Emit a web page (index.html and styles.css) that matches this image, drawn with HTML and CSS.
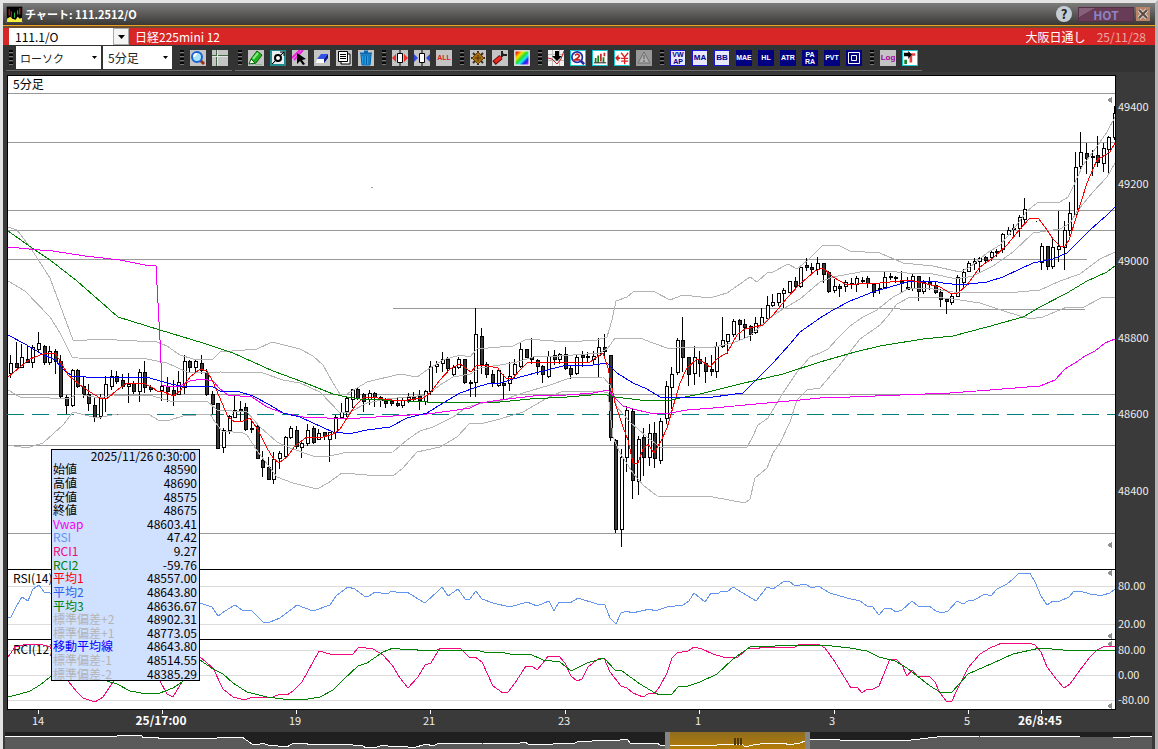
FILE: index.html
```html
<!DOCTYPE html>
<html lang="ja">
<head>
  <meta charset="UTF-8">
  <meta name="viewport" content="width=device-width, initial-scale=1.0">
  <title>チャート: 111.2512/O</title>
  <link rel="stylesheet" href="styles.css">
</head>
<body>
  <div class="window">
    <header class="titlebar">
      <svg class="app-icon" viewBox="0 0 16 16">
        <rect width="16" height="16" fill="#000" stroke="#888"/>
        <path d="M3 3v6M5 5v6" stroke="#d02020"/><path d="M8 6v5M11 4v4" stroke="#20c040"/><path d="M13 2v6" stroke="#e03030"/>
        <path d="M1 15v-3l3-2 2 2 3 1 2-3 2 2 2-1v4z" fill="#f8f040"/>
      </svg>
      <h1>チャート: 111.2512/O</h1>
      <button class="help" aria-label="ヘルプ">?</button>
      <button class="hot">HOT</button>
      <button class="close" aria-label="閉じる">
        <svg viewBox="0 0 14 14"><path d="M3 3l8 8M11 3l-8 8" stroke="#d8d0c0" stroke-width="4"/><path d="M3 3l8 8M11 3l-8 8" stroke="#5a4a48" stroke-width="2"/></svg>
      </button>
    </header>

    <div class="symbolbar">
      <input class="code" type="text" value="111.1/O" aria-label="銘柄コード">
      <button class="drop" aria-label="銘柄一覧"><svg viewBox="0 0 7 4"><path d="M0 0h7L3.500 4z"/></svg></button>
      <span class="name">日経225mini 12</span>
      <span class="market">大阪日通し</span>
      <span class="date">25/11/28</span>
    </div>

    <nav class="toolbars">
      <div class="toolbar">
        <span class="sep"></span>
        <select class="type" aria-label="チャート種類"><option>ローソク</option></select>
        <select class="span" aria-label="足種"><option>5分足</option></select>
        <span class="sep"></span>
        <button class="tool" aria-label="拡大"><svg viewBox="0 0 16 16"><path d="M10 10l4 4" stroke="#a03010" stroke-width="3"/><circle cx="7" cy="7" r="5" fill="#a8e4fa" stroke="#1860d8" stroke-width="2"/><path d="M4 7q0-3 3-3" stroke="#fff" fill="none" stroke-width="2"/></svg></button>
        <button class="tool" aria-label="十字線"><svg viewBox="0 0 16 16"><path d="M0 5.500h16M4.500 0v16" stroke="#456845"/><path d="M0 6.500h16M5.500 0v16" stroke="#e0e8e0"/></svg></button>
      </div>
      <div class="toolbar">
        <span class="sep"></span>
        <button class="tool" aria-label="ペン"><svg viewBox="0 0 16 16"><path d="M3 9L9 1l5 4-6 8-4 1z" fill="#20b020" stroke="#086808"/><path d="M5 9l5-6" stroke="#80f080" stroke-width="2"/><path d="M1 14l2-5 4 4z" fill="#fff" stroke="#086808"/><path d="M7 14.500h7" stroke="#88b888"/></svg></button>
        <button class="tool" aria-label="編集"><svg viewBox="0 0 16 16"><rect width="16" height="16" fill="#208c90"/><path d="M2 1h12L2 14zM14 2v12H3z" fill="#e8eef0"/><path d="M2 14L14 2M10 2h4v4" stroke="#000" fill="none"/><circle cx="8" cy="8" r="3" fill="#fff" stroke="#000" stroke-width="2"/></svg></button>
        <button class="tool" aria-label="選択"><svg viewBox="0 0 16 16"><path d="M0 8L8 0M2 10L11 0" stroke="#f020e0" stroke-width="2"/><path d="M5 3v11l3-3 3 4 2-1-3-4 4-1z" fill="#000"/></svg></button>
        <button class="tool" aria-label="消しゴム"><svg viewBox="0 0 16 16"><path d="M7 4h7l-4 5H3z" fill="#3050e8"/><path d="M14 4v4l-4 5V9z" fill="#001880"/><path d="M3 9h7v4H2z" fill="#fff"/></svg></button>
        <button class="tool" aria-label="一覧"><svg viewBox="0 0 16 16"><path d="M5 4h9v10H5z" fill="#fff" stroke="#000"/><path d="M2.500 1.500h9v10h-9z" fill="#fff" stroke="#000"/><path d="M4 4.500h6M4 6.500h6M4 8.500h6" stroke="#000"/></svg></button>
        <button class="tool" aria-label="削除"><svg viewBox="0 0 16 16"><path d="M2 3.500h12M6 1.500h4" stroke="#0868b8" stroke-width="2"/><path d="M3 5h10l-1 10H4z" fill="#20a0e8" stroke="#0060a8"/><path d="M6 6v8M8.500 6v8M11 6v8" stroke="#0060a8"/></svg></button>
        <span class="sep"></span>
        <button class="tool" aria-label="足幅拡大"><svg viewBox="0 0 16 16"><path d="M8 0v16" stroke="#000"/><path d="M5.500 3.500h5v9h-5z" fill="#fff" stroke="#000"/><path d="M0 8l4-4v8zM16 8l-4-4v8z" fill="#e83028"/></svg></button>
        <button class="tool" aria-label="足幅縮小"><svg viewBox="0 0 16 16"><path d="M8 0v16" stroke="#000"/><path d="M5.500 3.500h5v9h-5z" fill="#fff" stroke="#000"/><path d="M4 8L0 4v8zM12 8l4-4v8z" fill="#3048e0"/></svg></button>
        <button class="tool all">ALL</button>
        <span class="sep"></span>
        <button class="tool" aria-label="設定"><svg viewBox="0 0 16 16"><path d="M8 1v14M1 8h14M3 3l10 10M13 3L3 13" stroke="#3a3020" stroke-width="2"/><path d="M8 2l6 6-6 6-6-6z" fill="#a86c10" stroke="#60400c"/><path d="M5 8h6M8 5v6" stroke="#503408"/></svg></button>
        <button class="tool" aria-label="ツール"><svg viewBox="0 0 16 16"><path d="M8 8l4-4M10 1v4h5" stroke="#202020" stroke-width="2" fill="none"/><path d="M2 13l7-6" stroke="#700808" stroke-width="5"/><path d="M3 12l6-5" stroke="#f02820" stroke-width="3"/></svg></button>
        <button class="tool" aria-label="配色"><svg viewBox="0 0 16 16"><defs><linearGradient id="rainbow" x2="1" y2="1"><stop offset=".1" stop-color="#f01010"/><stop offset=".3" stop-color="#ffe000"/><stop offset=".48" stop-color="#20e030"/><stop offset=".62" stop-color="#20e8f8"/><stop offset=".76" stop-color="#1028f0"/><stop offset="1" stop-color="#f020e8"/></linearGradient></defs><path d="M1 1h14v14H1z" fill="url(#rainbow)" stroke="#eee"/></svg></button>
        <span class="sep"></span>
        <button class="tool" aria-label="売買"><svg viewBox="0 0 16 16"><path d="M0 0h16v16H0z" fill="#f0f0f0"/><path d="M0 4.500h16M0 10.500h16M4.500 0v16M11.500 0v16" stroke="#bbb"/><path d="M0 8l4 1 5 5 4-5 3-8" stroke="#c02020" fill="none"/><path d="M7 1h4v5h3l-5 5-5-5h3z"/></svg></button>
        <button class="tool cyan" aria-label="検索"><svg viewBox="0 0 16 16"><path d="M10 10l5 5" stroke="#2028a0" stroke-width="3"/><circle cx="7" cy="7" r="6" fill="#fff" stroke="#2030a8" stroke-width="2"/><path d="M4.500 5q3-3 5 0 0 2-5 5h6" stroke="#d02020" fill="none" stroke-width="2"/></svg></button>
        <button class="tool cyan" aria-label="比較"><svg viewBox="0 0 16 16"><path d="M3 8v5M6 5v8M12 7v6" stroke="#108020" stroke-width="2"/><path d="M9 3v9M13 2v4" stroke="#d02828" stroke-width="2"/><path d="M1 13.500h14" stroke="#000"/></svg></button>
        <button class="tool cyan" aria-label="円表示"><svg viewBox="0 0 16 16"><path d="M0 8l4-4v3h2v2H4v3z" fill="#d82020"/><path d="M7 2l4 5 4-5M11 7v8M7 8.500h8M7 11.500h8" stroke="#d82020" fill="none" stroke-width="1.500"/></svg></button>
        <button class="tool dim" aria-label="アラート"><svg viewBox="0 0 16 16"><path d="M8 2l6 11H2z" fill="#b0b0b0" stroke="#707070"/><path d="M8 5v4M8 10v2" stroke="#555"/></svg></button>
        <span class="sep"></span>
        <button class="tool vwap"><span>VW</span><span>AP</span></button>
        <button class="tool light">MA</button>
        <button class="tool light">BB</button>
        <button class="tool navy">MAE</button>
        <button class="tool navy">HL</button>
        <button class="tool navy">ATR</button>
        <button class="tool navy two"><span>PA</span><span>RA</span></button>
        <button class="tool navy">PVT</button>
        <button class="tool navy" aria-label="枠"><svg viewBox="0 0 16 16"><path d="M2.500 2.500h11v11h-11zM5.500 5.500h5v5h-5z" fill="none" stroke="#fff"/></svg></button>
        <span class="sep"></span>
        <button class="tool log">Log</button>
        <button class="tool cyan" aria-label="終了"><svg viewBox="0 0 16 16"><path d="M9 3v10M9 4h5" stroke="#e04040" stroke-width="3"/><path d="M1 2h5V0l4 4-4 5V6H1z"/><path d="M3 10v5" stroke="#108020" stroke-width="3"/></svg></button>
      </div>
    </nav>

    <main class="chart">
      <svg class="plot" viewBox="3 72 1152 677" role="img" aria-label="5分足チャート">
        <defs>
          <linearGradient id="gold" x2="0" y2="1"><stop offset="0" stop-color="#8f6d1e"/><stop offset="1" stop-color="#b47c08"/></linearGradient>
          <clipPath id="area"><rect x="8" y="76" width="1107" height="633"/></clipPath>
        </defs>
        <rect class="canvas" x="7.500" y="75.500" width="1108" height="634"/>
        <g class="sub-grid">
          <path d="M8 586.500h1107M8 624.500h1107M8 650.500h1107M8 675.500h1107M8 700.500h1107"/>
        </g>
        <g class="levels">
          <path d="M8 93.500h1107M8 142.500h1107M8 210.500h1107M8 230.500h1107M8 259.500h1079M393 308.500h507M900 309.500h185M8 394.500h1107M8 445.500h1107M8 533.500h1107"/>
          <path d="M371 187.500h2"/>
        </g>
        <path class="last" d="M7 414.500h1108"/>
        <path class="divider" d="M7 569.500h1109M7 639.500h1109"/>
        <g class="label">
          <text x="13" y="89">5分足</text>
          <text x="13" y="583">RSI(14)</text>
          <text x="13" y="654">RCI(12)</text>
        </g>
        <g id="series" clip-path="url(#area)"></g>
        <g class="marks">
          <path d="M1112 97v6l-5-3zM1112 542v6l-5-3zM1112 570v6l-5-3zM1112 633v6l-5-3zM1112 641v6l-5-3zM1112 703v6l-5-3z"/>
        </g>
        <g class="axis">
          <text x="1118" y="111">49400</text>
          <text x="1118" y="188">49200</text>
          <text x="1118" y="265">49000</text>
          <text x="1118" y="342">48800</text>
          <text x="1118" y="418">48600</text>
          <text x="1118" y="495">48400</text>
          <text x="1118" y="590">80.00</text>
          <text x="1118" y="628">20.00</text>
          <text x="1118" y="654">80.00</text>
          <text x="1118" y="679">0.00</text>
          <text x="1118" y="704">-80.00</text>
        </g>
        <g class="axis time">
          <path d="M38.500 710v4M162.500 710v4M296.500 710v4M430.500 710v4M565.500 710v4M699.500 710v4M834.500 710v4M968.500 710v4M1041.500 710v4"/>
          <text x="38" y="725">14</text>
          <text class="day" x="161" y="725">25/17:00</text>
          <text x="295" y="725">19</text>
          <text x="429" y="725">21</text>
          <text x="564" y="725">23</text>
          <text x="698" y="725">1</text>
          <text x="832" y="725">3</text>
          <text x="967" y="725">5</text>
          <text class="day" x="1040" y="725">26/8:45</text>
        </g>
        <rect class="nav-bg" x="5" y="732" width="1147" height="17"/>
        <polygon id="navArea" class="nav-area"/>
        <rect x="670" y="732" width="135" height="17" fill="url(#gold)"/>
        <polyline id="navLine" class="nav-line"/>
        <rect class="handle" x="665" y="732" width="5" height="17" rx="1"/>
        <rect class="handle" x="805" y="732" width="5" height="17" rx="1"/>
        <path class="grip" d="M735 738v7M738 738v7M741 738v7"/>
      </svg>

      <table class="tip">
        <caption>2025/11/26 0:30:00</caption>
        <tbody>
          <tr><th>始値</th><td>48590</td></tr>
          <tr><th>高値</th><td>48690</td></tr>
          <tr><th>安値</th><td>48575</td></tr>
          <tr><th>終値</th><td>48675</td></tr>
          <tr><th class="c-vwap">Vwap</th><td>48603.41</td></tr>
          <tr><th class="c-rsi">RSI</th><td>47.42</td></tr>
          <tr><th class="c-rci1">RCI1</th><td>9.27</td></tr>
          <tr><th class="c-green">RCI2</th><td>-59.76</td></tr>
          <tr><th class="c-red">平均1</th><td>48557.00</td></tr>
          <tr><th class="c-blue">平均2</th><td>48643.80</td></tr>
          <tr><th class="c-green">平均3</th><td>48636.67</td></tr>
          <tr><th class="c-band">標準偏差+2</th><td>48902.31</td></tr>
          <tr><th class="c-band">標準偏差+1</th><td>48773.05</td></tr>
          <tr><th class="c-mid">移動平均線</th><td>48643.80</td></tr>
          <tr><th class="c-band">標準偏差-1</th><td>48514.55</td></tr>
          <tr><th class="c-band">標準偏差-2</th><td>48385.29</td></tr>
        </tbody>
      </table>
    </main>
  </div>
  <script src="chart.js"></script>
</body>
</html>
```
FILE: styles.css
```css
* {
  box-sizing: border-box;
}

body {
  margin: 0;
  background-color: #3a3a3a;
  font-family: "Noto Sans CJK JP", sans-serif;
  font-size: 12px;
}

button, input, select {
  font-family: inherit;
  margin: 0;
  padding: 0;
  border: none;
}

.window {
  border: 3px solid #e4e4e4;
  border-right-color: #b4b4b4;
  border-bottom: none;
}

/* title bar */
.titlebar {
  display: flex;
  align-items: center;
  height: 23px;
  padding: 0 5px 0 3px;
  background: linear-gradient(#7c7c7c, #3a3834);
  border-bottom: 1px solid #f0a020;
}

.app-icon {
  width: 17px;
  height: 17px;
}

.titlebar h1 {
  flex: 1;
  margin: 0 2px;
  color: #fff;
  font-size: 11px;
  line-height: 20px;
}

.help {
  width: 16px;
  height: 16px;
  border-radius: 8px;
  background-color: #c4ccd4;
  color: #222;
  font-size: 13px;
  font-weight: bold;
  line-height: 16px;
}

.hot {
  width: 56px;
  height: 15px;
  margin: 0 2px 0 6px;
  border: 1px solid #56304a;
  background: linear-gradient(150deg, #86607a 20%, #683c56 21%);
  color: #8c84c4;
  font-size: 12px;
  font-weight: bold;
  line-height: 13px;
}

.close {
  width: 14px;
  height: 14px;
  background-color: #b88468;
}

.close svg {
  display: block;
}

/* symbol bar */
.symbolbar {
  display: flex;
  align-items: center;
  height: 19px;
  padding: 0 9px 0 6px;
  border-top: 2px solid #6a5030;
  background-color: #d82626;
  color: #fff;
  line-height: 17px;
}

.code {
  width: 104px;
  height: 17px;
  padding-left: 6px;
  background-color: #fff;
  font-size: 12px;
}

.drop {
  width: 16px;
  height: 17px;
  border: 1px solid #aaa;
  background-color: #f4f4f4;
}

.drop svg {
  display: block;
  width: 7px;
  margin: 0 auto;
}

.name {
  flex: 1;
  margin-left: 6px;
}

.date {
  margin-left: 11px;
  color: #e8a8a0;
}

/* toolbars */
.toolbars {
  display: flex;
  gap: 3px;
  height: 27px;
  padding: 0 3px;
  background-color: #333;
}

.toolbar {
  display: flex;
  align-items: center;
  gap: 6px;
  height: 26px;
  padding: 0 4px 0 3px;
  border-bottom: 1px solid #6c6c6c;
}

.sep {
  width: 4px;
  height: 16px;
  margin-left: 2px;
  background: repeating-linear-gradient(#080808 0 2px, #777 2px 3px, transparent 3px 4px);
}

.toolbar .sep:first-child {
  margin-left: 0;
}

.toolbar select {
  height: 23px;
  background: #fff url("data:image/svg+xml,%3Csvg xmlns='http://www.w3.org/2000/svg' width='5' height='3'%3E%3Cpath d='M0 0h5L2.500 3z'/%3E%3C/svg%3E") no-repeat right 4px center;
  appearance: none;
  color: #222;
}

.type {
  width: 85px;
  margin-left: -3px;
  padding-left: 4px;
  font-size: 11px;
}

.span {
  width: 69px;
  margin-left: -4px;
  padding-left: 5px;
  font-size: 12px;
}

.tool {
  width: 16px;
  height: 16px;
  background-color: #c4c4c4;
  overflow: hidden;
  font-family: "Liberation Sans", sans-serif;
  font-size: 8px;
  line-height: 16px;
  text-align: center;
}

.tool svg {
  display: block;
  width: 100%;
  height: 100%;
}

.all {
  color: #e01818;
  font-weight: bold;
  font-size: 7px;
}

.cyan {
  border: 1px solid #18c8d0;
  background-color: #fff;
}

.dim {
  background-color: #999;
}

.light, .vwap {
  border: 1px solid #1818d8;
  background-color: #e8e8f8;
  color: #000090;
  line-height: 14px;
  font-weight: bold;
}

.navy {
  background-color: #000080;
  color: #fff;
  font-size: 7px;
  font-weight: bold;
}

.vwap span, .two span {
  display: block;
  font-size: 7px;
  line-height: 7px;
}

.log {
  color: #a000a0;
  font-weight: bold;
}

/* chart */
.chart {
  position: relative;
}

.plot {
  display: block;
  width: 100%;
  background-color: #3a3a3a;
  shape-rendering: crispEdges;
  font-size: 12px;
}

.canvas {
  fill: #fff;
  stroke: #000;
}

.sub-grid {
  stroke: #dcdcdc;
}

.levels {
  stroke: #999;
}

.last {
  stroke: #008080;
  stroke-dasharray: 17 8;
}

.divider {
  stroke: #000;
}

.line {
  fill: none;
}

.band { stroke: #b4b4b4; }
.red { stroke: #f00; }
.blue { stroke: #00f; }
.green { stroke: #008000; }
.vwap-line { stroke: #f000f0; }
.rsi { stroke: #6495ed; }
.rci { stroke: #f0087c; }

.wick {
  stroke: #000;
}

.body {
  fill: #fff;
  stroke: #000;
}

.down {
  fill: #383838;
}

.marks {
  fill: #909090;
}

.axis {
  fill: #eee;
  font-size: 11px;
}

.time {
  text-anchor: middle;
}

.time path {
  stroke: #fff;
}

.day {
  font-weight: bold;
  fill: #fff;
  font-size: 12px;
}

.nav-bg {
  fill: #202020;
}

.nav-area {
  fill: #5a5a5a;
}

.nav-line {
  fill: none;
  stroke: #fff;
}

.handle {
  fill: #858585;
}

.grip {
  stroke: #4c3808;
  stroke-width: 2;
}

/* values under the cursor */
.tip {
  position: absolute;
  left: 48px;
  top: 377px;
  width: 149px;
  height: 219px;
  border: 1px solid #000;
  border-top: none;
  border-spacing: 0;
  background-color: #d0e0ff;
  line-height: 13px;
}

.tip caption {
  height: 13px;
  padding-right: 3px;
  border: 1px solid #000;
  border-bottom: none;
  background-color: #d0e0ff;
  line-height: 12px;
  text-align: right;
}

.tip th, .tip td {
  padding: 0 2px 0 1px;
  font-weight: normal;
  text-align: left;
}

.tip td {
  text-align: right;
}

.c-vwap { color: #f000f0; }
.c-rsi { color: #6495ed; }
.c-rci1 { color: #f0087c; }
.c-green { color: #008000; }
.c-red { color: #f00; }
.c-blue { color: #2860f0; }
.c-band { color: #b4b4b4; }
.c-mid { color: #00f; }
```
FILE: chart.js
```js
const NS = 'http://www.w3.org/2000/svg';
const STEP = 5.604;
const START = 10.5;

// index: high, low, body top, body bottom, 1 = falling
const candles = {
  0: [355,377,363,373,0], 1: [342,367,363,367,1], 2: [344,367,357,367,0], 3: [345,362,359,362,1],
  4: [345,367,347,362,0], 5: [332,352,343,349,0], 6: [345,364,346,362,1], 7: [346,364,351,362,0],
  8: [349,373,351,361,1], 9: [355,397,361,396,1], 10: [395,413,397,405,1], 11: [369,406,370,405,0],
  12: [369,387,370,386,1], 13: [377,397,386,394,1], 14: [384,410,394,403,1], 15: [397,421,405,417,1],
  16: [394,418,397,416,0], 17: [376,411,384,398,0], 18: [370,389,376,386,0], 19: [371,383,376,381,1],
  20: [374,388,380,386,1], 21: [373,402,384,386,0], 22: [381,393,383,391,1], 23: [369,401,372,391,0],
  24: [361,392,372,387,1], 25: [385,391,387,389,1], 27: [369,400,386,390,0], 28: [377,401,386,391,1],
  29: [380,405,390,395,1], 30: [371,394,382,394,0], 31: [355,393,361,387,0], 32: [360,372,361,367,1],
  33: [360,371,361,367,0], 34: [355,373,363,370,1], 35: [369,395,372,394,1], 36: [391,413,394,404,1],
  37: [403,448,403,448,1], 38: [428,452,430,447,0], 39: [415,433,416,430,0], 40: [396,417,410,417,0],
  41: [401,421,409,411,1], 42: [403,430,407,429,1], 43: [420,432,428,429,1], 44: [424,458,426,458,1],
  45: [451,476,460,467,1], 46: [457,479,467,479,1], 47: [452,483,459,479,0], 48: [451,468,453,458,0],
  49: [436,458,437,456,0], 50: [426,438,428,437,0], 51: [426,448,430,446,1], 52: [442,457,443,447,0],
  53: [424,445,430,443,0], 54: [426,443,428,442,1], 55: [429,439,433,439,0], 56: [432,439,432,436,1],
  57: [432,461,432,439,0], 58: [415,438,417,432,0], 59: [403,418,412,417,0], 60: [397,416,398,411,0],
  61: [389,407,389,399,0], 62: [387,399,389,398,1], 63: [393,411,394,401,1], 64: [390,404,393,399,0],
  65: [392,406,393,397,1], 66: [396,406,397,400,1], 67: [398,407,401,403,1], 68: [399,405,401,403,1],
  69: [398,406,403,405,1], 70: [398,407,400,405,0], 71: [393,402,397,400,0], 72: [392,400,397,399,1],
  73: [390,409,396,400,1], 74: [390,404,391,401,0], 75: [361,394,366,391,0], 76: [361,372,364,366,0],
  77: [352,371,359,363,0], 78: [357,372,359,368,1], 79: [365,375,367,374,0], 80: [357,368,359,367,0],
  81: [359,383,359,382,1], 82: [380,396,382,383,1], 83: [308,396,334,382,0], 84: [328,373,336,364,1],
  85: [362,377,364,374,1], 86: [370,386,374,382,1], 87: [369,386,370,385,0], 88: [374,398,383,385,1],
  89: [362,390,376,383,0], 90: [359,378,364,374,0], 91: [343,367,349,366,0], 92: [349,357,349,357,1],
  93: [338,363,357,359,1], 94: [359,374,360,366,1], 95: [365,382,366,374,1], 96: [351,377,356,376,0],
  97: [350,364,355,359,1], 98: [353,363,354,359,0], 99: [347,369,354,368,1], 100: [366,378,368,374,1],
  101: [355,374,357,373,0], 102: [351,366,355,357,1], 103: [352,362,356,357,1], 104: [351,364,356,359,0],
  105: [338,377,347,355,0], 106: [334,358,347,351,1], 107: [355,440,355,437,1], 108: [439,532,440,529,1],
  109: [449,546,457,529,0], 110: [406,471,410,457,0], 111: [409,498,411,480,1], 112: [436,494,439,481,0],
  113: [428,475,437,457,1], 114: [424,465,433,457,0], 115: [422,467,433,458,1], 116: [418,463,421,460,0],
  117: [381,423,386,418,0], 118: [367,408,374,387,0], 119: [338,374,340,372,0], 120: [317,371,340,357,1],
  121: [357,385,357,374,1], 122: [346,384,357,373,0], 123: [351,376,359,363,1], 124: [357,382,363,371,1],
  125: [355,375,369,371,1], 126: [342,377,346,371,0], 127: [317,347,340,346,0], 128: [334,353,334,341,0],
  129: [319,336,321,334,0], 130: [319,339,320,324,1], 131: [319,337,324,327,1], 132: [325,340,326,334,1],
  133: [317,333,323,332,0], 134: [308,325,317,324,0], 135: [296,319,305,318,0], 136: [294,306,302,305,0],
  137: [293,305,293,302,0], 138: [288,308,290,293,0], 139: [281,292,281,292,0], 140: [277,287,281,286,1],
  141: [266,287,267,286,0], 142: [258,270,265,267,1], 143: [263,273,267,269,1], 144: [257,274,263,269,0],
  145: [263,282,263,274,1], 146: [271,292,272,291,1], 147: [279,292,286,290,0], 148: [284,296,286,288,1],
  149: [280,291,282,286,0], 150: [278,288,283,284,1], 151: [276,291,278,284,0], 152: [277,283,280,281,1],
  153: [276,287,278,283,1], 154: [283,296,284,292,1], 155: [283,293,288,289,1], 156: [272,287,277,287,0],
  157: [273,279,276,277,1], 158: [276,282,277,278,1], 159: [271,291,281,283,1], 160: [277,289,287,289,1],
  161: [274,290,276,288,0], 162: [276,300,276,291,1], 163: [280,293,282,291,0], 164: [277,289,282,284,1],
  165: [282,293,285,292,1], 166: [289,306,292,299,1], 167: [298,313,299,301,1], 168: [293,304,296,302,0],
  169: [275,296,277,296,0], 170: [269,286,272,282,0], 171: [261,271,263,271,0], 172: [258,269,261,263,0],
  173: [257,271,258,261,0], 174: [256,262,257,260,1], 175: [251,260,252,257,0], 176: [249,256,251,252,1],
  177: [233,252,234,249,0], 178: [227,234,230,234,0], 179: [224,236,228,229,1], 180: [215,236,217,228,0],
  181: [198,223,209,219,0], 183: [221,221,221,221,1], 184: [243,269,246,262,0], 185: [246,269,246,266,1],
  186: [237,268,247,266,0], 187: [211,261,246,249,0], 188: [221,269,230,247,0], 189: [202,235,213,230,0],
  190: [152,214,167,214,0], 191: [132,169,152,166,0], 192: [143,173,153,158,1], 193: [150,175,156,157,0],
  194: [136,166,155,162,1], 195: [143,171,148,163,0], 196: [136,172,137,149,0], 197: [106,139,113,137,0]
};

const bands = [
  '8,227 17,230 30,247 50,278 63,313 73,340 77,341 97,339 157,342 167,346 180,355 193,359 213,359 220,352 257,349 272,342 300,349 313,356 323,365 333,383 340,394 347,394 367,382 400,374 417,377 430,368 443,360 460,355 470,357 477,349 500,347 513,346 527,339 567,342 597,340 607,337 612,320 616,301 627,297 633,292 643,291 655,292 670,300 683,295 710,298 727,293 750,277 757,282 767,273 773,272 788,264 797,269 808,260 823,245 840,246 850,251 880,253 903,263 933,266 960,272 970,267 987,253 1000,245 1013,230 1027,211 1037,203 1060,202 1068,197 1073,187 1083,165 1093,152 1107,132 1115,117',
  '8,281 25,291 50,317 60,333 72,357 78,358 147,359 167,363 187,372 207,373 220,372 263,373 283,380 300,383 320,392 340,413 350,412 367,403 387,399 407,397 427,395 440,385 453,377 470,374 480,368 500,365 517,362 533,357 560,356 600,353 608,348 615,338 640,338 653,343 670,349 683,347 710,348 733,343 750,336 767,320 783,309 800,299 820,282 833,277 860,272 887,271 907,273 933,274 957,279 973,276 993,266 1013,252 1033,233 1060,229 1070,223 1078,210 1093,192 1107,177 1115,163',
  '8,390 20,397 50,398 70,398 77,394 100,398 113,395 153,396 170,401 207,401 217,410 247,412 260,427 277,442 290,448 313,456 330,456 343,453 393,452 407,440 420,431 433,427 453,417 467,407 483,403 500,401 523,393 550,385 570,378 603,377 610,385 617,407 630,422 647,437 660,447 747,447 752,438 758,425 768,418 783,393 797,372 810,357 820,353 828,349 837,339 850,326 863,317 877,310 893,297 910,288 933,289 953,292 1007,293 1040,290 1060,281 1080,274 1100,259 1115,252',
  '8,445 27,448 43,443 63,425 73,412 97,418 117,414 150,415 158,420 170,420 183,416 210,414 215,422 222,431 243,433 247,435 258,452 277,477 293,483 317,489 328,483 342,473 367,475 393,476 403,468 417,452 440,447 457,437 470,423 480,424 500,419 523,412 547,398 563,391 600,391 608,393 613,437 620,453 633,473 643,485 657,496 713,497 745,503 750,499 755,478 767,468 773,453 780,443 790,422 797,400 807,390 820,388 838,367 860,339 880,325 887,317 897,304 910,297 933,297 953,299 980,303 1007,312 1030,319 1043,317 1067,307 1082,308 1103,297 1115,297'
];

const lines = [
  ['green', '8,231 35,250 50,260 77,281 118,317 160,330 203,343 233,353 273,371 303,382 333,394 347,397 360,399 383,400 407,401 427,402 453,402 467,403 480,402 500,402 530,399 567,397 603,394 615,397 640,400 667,401 680,398 700,394 740,384 783,374 820,362 855,352 880,346 923,339 953,336 987,327 1023,317 1040,307 1067,293 1087,281 1107,272 1115,266'],
  ['vwap-line', '8,247 40,250 53,251 85,256 120,260 145,265 156,266 160,340 162,385 170,387 180,386 190,381 203,379 213,381 220,389 228,395 252,397 267,407 283,413 303,417 327,418 347,419 360,418 393,416 427,414 450,411 470,408 480,403 500,400 533,396 567,395 593,393 608,390 615,398 623,406 633,409 650,413 670,413 687,410 713,408 767,403 800,400 820,398 850,397 900,395 950,393 990,390 1040,386 1055,380 1065,369 1075,363 1085,356 1095,351 1105,343 1115,339'],
  ['blue', '8,335 25,344 40,353 55,360 63,369 72,376 100,378 120,377 150,378 167,383 180,386 200,386 213,387 220,391 240,392 253,396 270,405 283,413 300,417 313,423 333,432 343,433 353,433 367,430 390,427 407,418 427,413 443,403 460,393 477,387 487,384 500,383 520,377 543,371 563,366 593,365 607,363 617,373 633,383 647,389 660,397 673,398 687,397 713,397 743,393 757,379 773,363 790,344 800,332 820,318 833,310 850,301 873,292 890,287 907,282 933,281 943,283 960,285 987,282 1003,277 1020,269 1033,263 1053,259 1067,253 1077,243 1090,230 1107,215 1115,207'],
  ['red', '8,377 20,367 30,359 43,354 55,353 62,364 68,375 80,385 90,392 100,398 108,398 117,390 127,383 143,383 153,388 157,391 162,391 173,396 180,391 190,377 200,369 207,371 213,382 222,403 228,417 235,422 243,421 250,418 258,430 267,448 273,458 279,463 287,457 295,446 307,437 320,438 333,434 340,429 347,418 355,406 363,398 373,397 383,399 400,401 423,398 430,393 440,380 450,369 460,364 467,369 471,372 477,365 483,365 498,368 500,372 507,379 513,378 520,370 528,362 550,362 590,362 597,357 603,353 608,368 615,403 623,427 628,440 633,463 638,463 643,449 648,444 654,453 660,443 667,428 673,407 680,383 687,368 697,359 703,362 710,367 718,358 727,353 737,335 745,329 763,325 773,315 787,298 800,284 815,271 823,268 833,277 847,285 867,283 880,283 910,280 927,284 940,287 950,293 958,293 967,285 980,267 993,258 1007,245 1020,229 1030,218 1038,218 1045,227 1053,239 1060,246 1065,246 1069,240 1077,215 1087,183 1097,160 1110,152 1115,143'],
  ['rsi', '8,618 11,617 17,605 22,597 28,601 33,589 39,585 44,592 50,593 100,600 150,598 200,603 212,607 218,616 225,611 235,605 242,610 252,611 263,622 270,622 280,618 297,605 313,611 330,605 336,596 348,587 355,589 364,596 369,596 375,592 387,594 392,591 400,593 407,592 423,602 426,602 437,592 442,587 448,596 458,589 465,599 470,599 476,591 482,599 493,603 510,607 527,602 537,606 549,601 554,611 559,602 570,603 578,598 597,604 605,605 610,618 616,624 621,613 627,611 632,613 650,609 655,611 667,607 683,605 689,601 694,593 705,602 711,593 717,594 722,591 727,592 733,587 756,601 767,587 773,589 783,582 789,581 795,586 805,584 812,588 818,586 830,593 847,598 860,601 867,606 873,607 879,615 885,608 890,608 896,612 902,610 912,601 918,606 929,606 936,611 942,613 948,611 957,601 963,604 968,601 974,600 985,594 991,596 997,589 1007,584 1013,579 1019,573 1030,573 1035,582 1041,596 1047,605 1053,601 1058,602 1069,597 1074,591 1080,591 1090,594 1097,595 1103,595 1110,593 1115,589'],
  ['rci', '8,657 15,647 27,644 40,644 50,647 68,681 77,692 83,698 95,702 103,697 113,682 130,655 148,655 160,681 167,694 173,697 182,682 190,660 200,657 213,668 223,689 233,697 245,700 252,697 273,697 280,694 287,695 293,691 302,682 313,662 319,651 330,654 353,654 359,647 373,649 383,655 392,665 400,678 408,688 418,677 425,665 431,663 440,648 460,648 470,658 475,657 482,662 488,675 493,686 503,693 508,692 515,683 526,666 532,666 537,670 543,663 548,656 559,656 565,663 571,676 577,681 582,679 588,667 598,659 604,658 610,672 621,686 627,688 633,693 643,697 648,694 655,693 660,686 667,673 672,658 677,653 688,651 694,647 702,649 713,654 723,657 738,657 748,648 756,649 763,647 795,647 800,644 820,645 825,648 835,662 851,688 857,687 862,693 867,689 873,689 879,686 890,659 897,660 902,665 907,676 912,670 918,677 929,676 935,682 940,693 946,701 952,701 957,690 968,668 980,654 990,648 1002,643 1029,643 1035,645 1041,652 1047,667 1057,680 1064,688 1070,684 1080,670 1090,657 1097,650 1103,647 1115,646'],
  ['green', '8,697 20,694 30,691 40,685 50,677 80,668 107,681 117,684 130,691 147,694 160,693 173,688 182,682 192,662 200,660 213,669 223,674 233,683 247,692 267,697 283,699 302,700 320,697 333,690 343,680 358,666 367,663 383,652 393,648 400,649 413,649 422,651 437,650 480,651 488,653 500,652 510,654 530,654 543,660 560,662 571,671 587,663 604,658 615,670 622,671 640,684 655,693 660,695 672,694 678,687 688,686 700,682 717,674 733,659 750,647 800,645 823,645 850,648 867,651 879,657 895,661 907,668 930,686 940,692 952,692 968,674 993,663 1013,654 1040,648 1063,650 1115,650']
];

const nav = '5,736 117,736 119,735 142,736 143,738 150,737 158,737 159,739 180,738 190,739 217,738 220,737 228,738 235,737 242,737 252,744 258,745 262,743 268,745 287,747 292,744 302,743 313,745 323,744 353,745 363,746 366,748 377,747 383,745 393,747 400,746 408,747 412,748 427,744 432,746 440,743 450,744 483,743 520,743 525,742 528,744 543,745 563,743 575,743 577,742 607,740 620,740 623,739 628,740 630,743 657,743 660,745 690,745 698,746 717,745 742,744 745,747 753,745 767,743 780,744 785,743 788,745 800,743 805,741 810,739 840,740 877,740 903,741 920,739 937,737 980,736 1020,736 1080,737 1113,737 1120,738 1140,736 1152,736';

const series = document.getElementById('series');

function add(tag, attrs) {
  const el = document.createElementNS(NS, tag);
  for (const key in attrs) {
    el.setAttribute(key, attrs[key]);
  }
  series.appendChild(el);
}

for (const i in candles) {
  const [high, low, top, bottom, down] = candles[i];
  const x = Math.floor(START + i * STEP) + 0.5;
  add('path', { class: 'wick', d: `M${x} ${high}V${low + 1}` });
  add('rect', {
    class: down ? 'body down' : 'body',
    x: x - 1,
    y: top + 0.5,
    width: 3,
    height: bottom - top
  });
}

bands.forEach(points => add('polyline', { class: 'line band', points }));
lines.forEach(([name, points]) => add('polyline', { class: 'line ' + name, points }));

document.getElementById('navLine').setAttribute('points', nav);
document.getElementById('navArea').setAttribute('points', '5,749 ' + nav + ' 1152,749');
```
